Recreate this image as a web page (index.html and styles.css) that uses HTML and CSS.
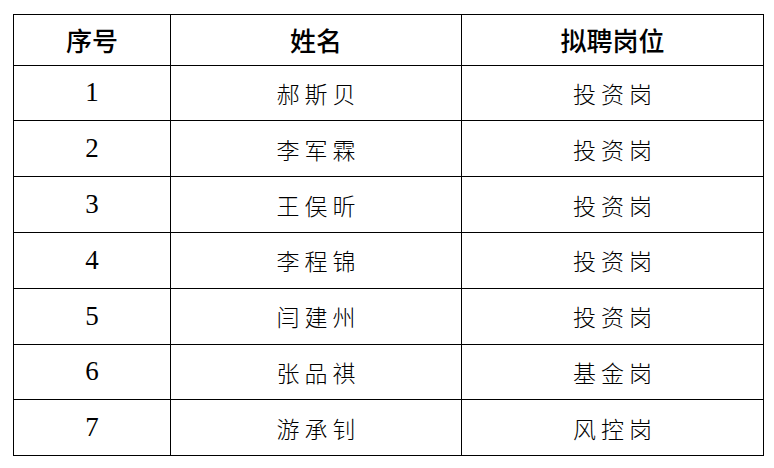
FILE: index.html
```html
<!DOCTYPE html>
<html lang="zh">
<head>
<meta charset="utf-8">
<link rel="stylesheet" href="styles.css">
</head>
<body>
<table class="roster">
  <colgroup>
    <col class="c1"><col class="c2"><col class="c3">
  </colgroup>
  <thead>
    <tr class="head"><th>序号</th><th>姓名</th><th>拟聘岗位</th></tr>
  </thead>
  <tbody>
    <tr><td class="num">1</td><td class="zh">郝斯贝</td><td class="zh">投资岗</td></tr>
    <tr><td class="num">2</td><td class="zh">李军霖</td><td class="zh">投资岗</td></tr>
    <tr><td class="num">3</td><td class="zh">王俣昕</td><td class="zh">投资岗</td></tr>
    <tr><td class="num">4</td><td class="zh">李程锦</td><td class="zh">投资岗</td></tr>
    <tr><td class="num">5</td><td class="zh">闫建州</td><td class="zh">投资岗</td></tr>
    <tr><td class="num">6</td><td class="zh">张品祺</td><td class="zh">基金岗</td></tr>
    <tr><td class="num">7</td><td class="zh">游承钊</td><td class="zh">风控岗</td></tr>
  </tbody>
</table>
</body>
</html>
```

FILE: styles.css
```css
html, body {
  margin: 0;
  padding: 0;
  background: #ffffff;
}
body {
  padding: 14px 0 0 13px;
}
.roster {
  border-collapse: collapse;
  table-layout: fixed;
  width: 750px;
  color: #000;
}
.c1 { width: 157px; }
.c2 { width: 291px; }
.c3 { width: 302px; }
.roster th, .roster td {
  border: 1.3px solid #000;
  padding: 0;
  text-align: center;
  vertical-align: middle;
}
.head th {
  height: 49.6px;
  font-family: "Noto Sans CJK SC", sans-serif;
  font-weight: 500;
  font-size: 26px;
  line-height: 1;
}
.roster td {
  height: 54.8px;
}
.num {
  font-family: "Liberation Serif", serif;
  font-size: 27px;
}
.zh {
  font-family: "Noto Sans CJK SC", sans-serif;
  font-weight: 300;
  font-size: 23px;
  letter-spacing: 5px;
  padding-left: 5px !important;
}
```
